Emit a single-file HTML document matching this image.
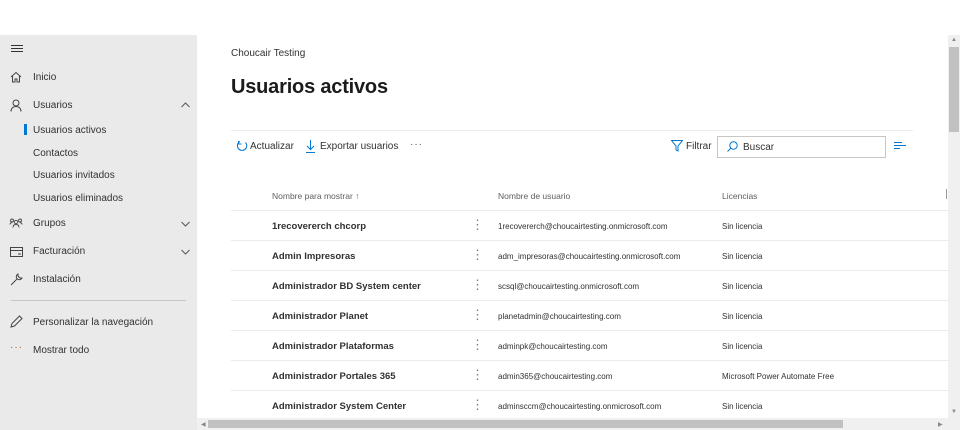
<!DOCTYPE html>
<html><head><meta charset="utf-8"><style>
*{margin:0;padding:0;box-sizing:border-box}
body{width:960px;height:430px;overflow:hidden;background:#fff;font-family:"Liberation Sans",sans-serif;color:#323130;position:relative}
.a{position:absolute;white-space:nowrap}
#side{position:absolute;left:0;top:35px;width:197px;height:395px;background:#eaeaea}
.nav{font-size:10px;color:#323130}
.row{position:absolute;left:231px;width:717px;height:30px;border-bottom:1px solid #edebe9}
.row .n{position:absolute;left:41px;top:10px;font-size:9.5px;font-weight:bold;color:#323130}
.row .d{position:absolute;left:240px;top:6px;font-size:13px;color:#777;letter-spacing:0}
.row .u{position:absolute;left:267px;top:11px;font-size:8px;color:#323130}
.row .l{position:absolute;left:491px;top:11px;font-size:8px;color:#323130}
</style></head><body>
<div id="side">
<div class="a" style="left:11px;top:10px;width:12px"><div style="border-top:1px solid #333;height:3px"></div><div style="border-top:1px solid #333;height:3px"></div><div style="border-top:1px solid #333"></div></div>
<svg class="a" style="left:10px;top:36px" width="12" height="12" viewBox="0 0 12 12" fill="none" stroke="#444" stroke-width="1"><path d="M1 6L6 1.5 11 6M2.5 5v6h2.5V8h2v3h2.5V5"/></svg>
<div class="a nav" style="left:33px;top:37px">Inicio</div>
<svg class="a" style="left:10px;top:64px" width="12" height="13" viewBox="0 0 12 13" fill="none" stroke="#444"><circle cx="6" cy="4" r="3"/><path d="M1 12.5c0-3 2-5 5-5s5 2 5 5"/></svg>
<div class="a nav" style="left:33px;top:65px">Usuarios</div>
<svg class="a" style="left:181px;top:67px" width="9" height="6" viewBox="0 0 9 6" fill="none" stroke="#555"><path d="M.5 5L4.5 1 8.5 5"/></svg>
<div class="a" style="left:24px;top:89px;width:3px;height:11px;background:#0078d4"></div>
<div class="a nav" style="left:33px;top:90px">Usuarios activos</div>
<div class="a nav" style="left:33px;top:113px">Contactos</div>
<div class="a nav" style="left:33px;top:135px">Usuarios invitados</div>
<div class="a nav" style="left:33px;top:158px">Usuarios eliminados</div>
<svg class="a" style="left:9px;top:183px" width="14" height="10" viewBox="0 0 14 10" fill="none" stroke="#444" stroke-width=".9"><circle cx="3" cy="2.5" r="1.5"/><circle cx="11" cy="2.5" r="1.5"/><circle cx="7" cy="4" r="1.7"/><path d="M4 9.5c0-2 1.3-3 3-3s3 1 3 3M1 6.5c0-1 1-2 2-2M13 6.5c0-1-1-2-2-2"/></svg>
<div class="a nav" style="left:33px;top:183px">Grupos</div>
<svg class="a" style="left:181px;top:186px" width="9" height="6" viewBox="0 0 9 6" fill="none" stroke="#555"><path d="M.5 1L4.5 5 8.5 1"/></svg>
<svg class="a" style="left:10px;top:212px" width="13" height="10" viewBox="0 0 13 10" fill="none" stroke="#444"><rect x=".5" y=".5" width="12" height="9"/><path d="M.5 3.5h12M8 7h3"/></svg>
<div class="a nav" style="left:33px;top:211px">Facturación</div>
<svg class="a" style="left:181px;top:214px" width="9" height="6" viewBox="0 0 9 6" fill="none" stroke="#555"><path d="M.5 1L4.5 5 8.5 1"/></svg>
<svg class="a" style="left:10px;top:238px" width="13" height="13" viewBox="0 0 13 13" fill="none" stroke="#444"><path d="M1 12l6-6M8 1a3 3 0 1 0 4 4L10 5 8 3z"/></svg>
<div class="a nav" style="left:33px;top:239px">Instalación</div>
<div class="a" style="left:11px;top:265px;width:175px;border-top:1px solid #c8c6c4"></div>
<svg class="a" style="left:10px;top:280px" width="13" height="13" viewBox="0 0 13 13" fill="none" stroke="#444"><path d="M1 12l1-3.5L9.5 1l2.5 2.5L4.5 11z"/></svg>
<div class="a nav" style="left:33px;top:282px">Personalizar la navegación</div>
<div class="a" style="left:10px;top:307px;font-size:10px;color:#c4542c;letter-spacing:1px">···</div>
<div class="a nav" style="left:33px;top:310px">Mostrar todo</div>
</div>

<div class="a" style="left:231px;top:48px;font-size:10px;color:#323130">Choucair Testing</div>
<div class="a" style="left:231px;top:76px;font-size:20px;font-weight:bold;color:#1b1b1b;letter-spacing:-.2px">Usuarios activos</div>
<div class="a" style="left:231px;top:130px;width:682px;border-top:1px solid #edebe9"></div>

<svg class="a" style="left:236px;top:140px" width="12" height="12" viewBox="0 0 12 12" fill="none" stroke="#0078d4"><path d="M9.5 2.5A4.7 4.7 0 1 1 4 1.5M2.5 1v3h3"/></svg>
<div class="a" style="left:250px;top:141px;font-size:10px">Actualizar</div>
<svg class="a" style="left:306px;top:140px" width="9" height="13" viewBox="0 0 9 13" fill="none" stroke="#0078d4"><path d="M4.5 0v9M1 6l3.5 3.5L8 6M0 12.5h9"/></svg>
<div class="a" style="left:320px;top:141px;font-size:10px">Exportar usuarios</div>
<div class="a" style="left:410px;top:139px;font-size:10px;color:#555;letter-spacing:1px">···</div>
<svg class="a" style="left:671px;top:140px" width="12" height="12" viewBox="0 0 12 12" fill="none" stroke="#0078d4"><path d="M.5 .5h11L7 6v5L5 10V6z"/></svg>
<div class="a" style="left:686px;top:141px;font-size:10px">Filtrar</div>
<div class="a" style="left:717px;top:136px;width:169px;height:22px;border:1px solid #c8c6c4"></div>
<svg class="a" style="left:727px;top:141px" width="11" height="11" viewBox="0 0 11 11" fill="none" stroke="#0078d4"><circle cx="6.5" cy="4.5" r="3.7"/><path d="M4 7l-3.5 3.5"/></svg>
<div class="a" style="left:743px;top:142px;font-size:10px;color:#323130">Buscar</div>
<div class="a" style="left:894px;top:142px;width:12px"><div style="border-top:1px solid #0078d4;width:8px;height:3px"></div><div style="border-top:1px solid #0078d4;width:12px;height:3px"></div><div style="border-top:1px solid #0078d4;width:6px"></div></div>

<div class="a" style="left:272px;top:191px;font-size:8.5px;color:#605e5c">Nombre para mostrar ↑</div>
<div class="a" style="left:498px;top:191px;font-size:8.5px;color:#605e5c">Nombre de usuario</div>
<div class="a" style="left:722px;top:191px;font-size:8.5px;color:#605e5c">Licencias</div>
<div class="a" style="left:946px;top:189px;height:10px;border-left:1px solid #999"></div>
<div class="a" style="left:231px;top:210px;width:717px;border-top:1px solid #edebe9"></div>

<div class="row" style="top:211px"><span class="n">1recovererch chcorp</span><span class="d">⋮</span><span class="u">1recovererch@choucairtesting.onmicrosoft.com</span><span class="l">Sin licencia</span></div>
<div class="row" style="top:241px"><span class="n">Admin Impresoras</span><span class="d">⋮</span><span class="u">adm_impresoras@choucairtesting.onmicrosoft.com</span><span class="l">Sin licencia</span></div>
<div class="row" style="top:271px"><span class="n">Administrador BD System center</span><span class="d">⋮</span><span class="u">scsql@choucairtesting.onmicrosoft.com</span><span class="l">Sin licencia</span></div>
<div class="row" style="top:301px"><span class="n">Administrador Planet</span><span class="d">⋮</span><span class="u">planetadmin@choucairtesting.com</span><span class="l">Sin licencia</span></div>
<div class="row" style="top:331px"><span class="n">Administrador Plataformas</span><span class="d">⋮</span><span class="u">adminpk@choucairtesting.com</span><span class="l">Sin licencia</span></div>
<div class="row" style="top:361px"><span class="n">Administrador Portales 365</span><span class="d">⋮</span><span class="u">admin365@choucairtesting.com</span><span class="l">Microsoft Power Automate Free</span></div>
<div class="row" style="top:391px;border:none"><span class="n">Administrador System Center</span><span class="d">⋮</span><span class="u">adminsccm@choucairtesting.onmicrosoft.com</span><span class="l">Sin licencia</span></div>

<div class="a" style="left:197px;top:418px;width:751px;height:12px;background:#f0f0f0"></div>
<div class="a" style="left:208px;top:420px;width:635px;height:8px;background:#c1c1c1"></div>
<div class="a" style="left:201px;top:421px;font-size:6px;color:#888">◀</div>
<div class="a" style="left:938px;top:421px;font-size:6px;color:#888">▶</div>
<div class="a" style="left:948px;top:35px;width:12px;height:395px;background:#f0f0f0"></div>
<div class="a" style="left:949px;top:47px;width:10px;height:85px;background:#c1c1c1"></div>
<div class="a" style="left:951px;top:37px;font-size:6px;color:#888">▲</div>
<div class="a" style="left:951px;top:409px;font-size:6px;color:#888">▼</div>
</body></html>
